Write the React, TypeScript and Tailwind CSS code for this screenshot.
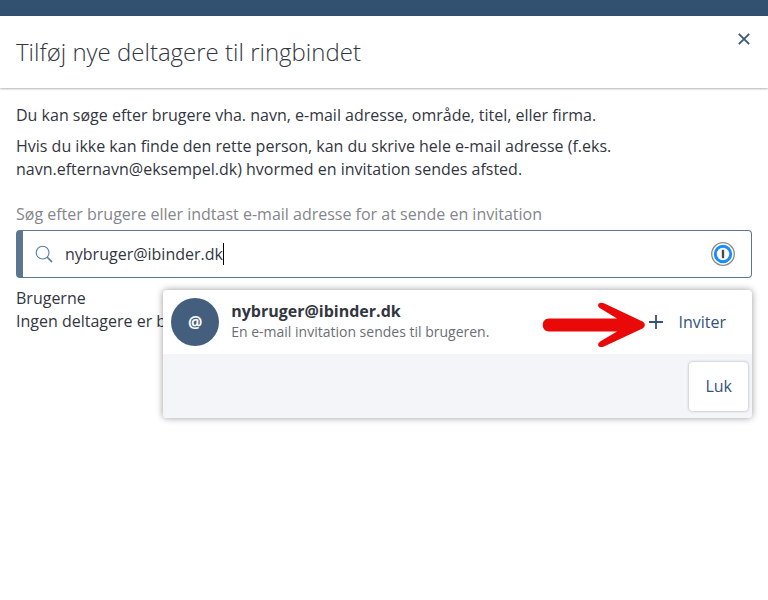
import React, { useState } from 'react';

interface IconProps {
  className?: string;
}

const SearchIcon: React.FC<IconProps> = ({ className }) => (
  <svg viewBox="0 0 18 18" className={className} fill="none" stroke="currentColor" strokeLinecap="round">
    <circle cx="7.6" cy="7.6" r="6.4" strokeWidth="1.1" />
    <path d="M12.4 12.4 L16.6 16.6" strokeWidth="1.5" />
  </svg>
);

const CloseIcon: React.FC<IconProps> = ({ className }) => (
  <svg viewBox="0 0 12 12" className={className} fill="none" stroke="currentColor" strokeWidth="1.9">
    <path d="M0.8 0.8 L11.2 11.2 M11.2 0.8 L0.8 11.2" />
  </svg>
);

const PlusIcon: React.FC<IconProps> = ({ className }) => (
  <svg viewBox="0 0 14 14" className={className} fill="none" stroke="currentColor" strokeWidth="1.8">
    <path d="M7 0 V14 M0 7 H14" />
  </svg>
);

const PasswordIcon: React.FC<IconProps> = ({ className }) => (
  <svg viewBox="0 0 24 24" className={className}>
    <circle cx="12" cy="12" r="11.3" fill="#fff" stroke="#8c8c8c" strokeWidth="1.3" />
    <circle cx="12" cy="12" r="7.7" fill="#fff" stroke="#1a8cff" strokeWidth="3" />
    <rect x="10.8" y="7.8" width="2.4" height="8.4" rx="0.6" fill="#4a4a4a" />
  </svg>
);

const ArrowMarker: React.FC<IconProps> = ({ className }) => (
  <svg viewBox="0 0 103 46" className={className} fill="#e90909">
    <path d="M7 16.5 H75 L58.5 6.6 C53.5 3.2 57 -1.2 62.5 1.6 L100.5 19.6 C103.6 21.3 103.6 24.7 100.5 26.4 L62.5 44.2 C57 47 53.5 42.6 58.5 39.2 L75 29.5 H7 C-1.3 29.5 -1.3 16.5 7 16.5 Z" />
  </svg>
);

const Suggestion: React.FC<{ email: string }> = ({ email }) => (
  <div className="absolute right-0 top-full mt-3 w-4/5 bg-white rounded shadow-[0_0_7px_rgba(0,0,0,0.4)] overflow-hidden z-10">
    <div className="h-16 px-2 flex items-center">
      <div className="w-12 h-12 shrink-0 rounded-full bg-[#435f7d] text-white text-base font-bold flex items-center justify-center">
        @
      </div>
      <div className="ml-3 pb-0.5 min-w-0">
        <div className="text-base leading-[22px] font-bold truncate">{email}</div>
        <div className="text-sm leading-5 text-[#6b6e76] truncate">En e-mail invitation sendes til brugeren.</div>
      </div>
      <ArrowMarker className="w-[103px] h-[46px] shrink-0 ml-auto mt-1.5" />
      <button type="button" className="ml-1 mr-[18px] flex items-center gap-[15px] text-[#34527a]">
        <PlusIcon className="w-3.5 h-3.5" />
        Inviter
      </button>
    </div>
    <div className="h-16 px-1 flex items-center justify-end bg-[#f4f5f8]">
      <button type="button" className="h-[49px] px-4 bg-white text-[#34527a] rounded shadow-[0_0_3px_rgba(0,0,0,0.3)]">
        Luk
      </button>
    </div>
  </div>
);

const App: React.FC = () => {
  const [query, setQuery] = useState('nybruger@ibinder.dk');

  return (
    <div className="min-h-screen bg-white text-[#33363f] text-base leading-[23px] font-['Open_Sans',sans-serif]">
      <div className="h-4 bg-[#32506f]" />

      <header className="h-18 px-4 flex items-center justify-between shadow-[0_1px_2px_rgba(0,0,0,0.3)]">
        <h1 className="text-2xl font-light">Tilføj nye deltagere til ringbindet</h1>
        <button type="button" aria-label="Luk vindue" className="self-start mt-[11px] p-1.5 -mr-1 text-[#3d5a7a]">
          <CloseIcon className="w-3 h-3" />
        </button>
      </header>

      <main className="px-4 pt-4">
        <p className="max-w-2xl mb-2">
          Du kan søge efter brugere vha. navn, e-mail adresse, område, titel, eller firma.
        </p>
        <p className="max-w-2xl">
          Hvis du ikke kan finde den rette person, kan du skrive hele e-mail adresse (f.eks. navn.efternavn@eksempel.dk)
          hvormed en invitation sendes afsted.
        </p>

        <label htmlFor="search" className="block mt-[22px] mb-1 text-[#84868c]">
          Søg efter brugere eller indtast e-mail adresse for at sende en invitation
        </label>
        <div className="relative">
          <div className="h-12 pl-3 pr-4 flex items-center border border-l-7 border-[#5b7690] rounded">
            <SearchIcon className="w-[18px] h-[18px] shrink-0 text-[#5b7fa5]" />
            <div className="relative flex-1 ml-3">
              <input
                id="search"
                type="text"
                value={query}
                onChange={(e) => setQuery(e.target.value)}
                className="w-full bg-transparent outline-none caret-transparent"
              />
              <div aria-hidden="true" className="absolute inset-0 flex items-center pointer-events-none">
                <span className="invisible">{query}</span>
                <span className="w-px h-[22px] bg-black" />
              </div>
            </div>
            <PasswordIcon className="w-6 h-6 shrink-0" />
          </div>
          <Suggestion email={query} />
        </div>

        <section className="mt-[9px]">
          <h2>Brugerne</h2>
          <p>Ingen deltagere er blevet tilføjet</p>
        </section>
      </main>
    </div>
  );
};

export default App;
